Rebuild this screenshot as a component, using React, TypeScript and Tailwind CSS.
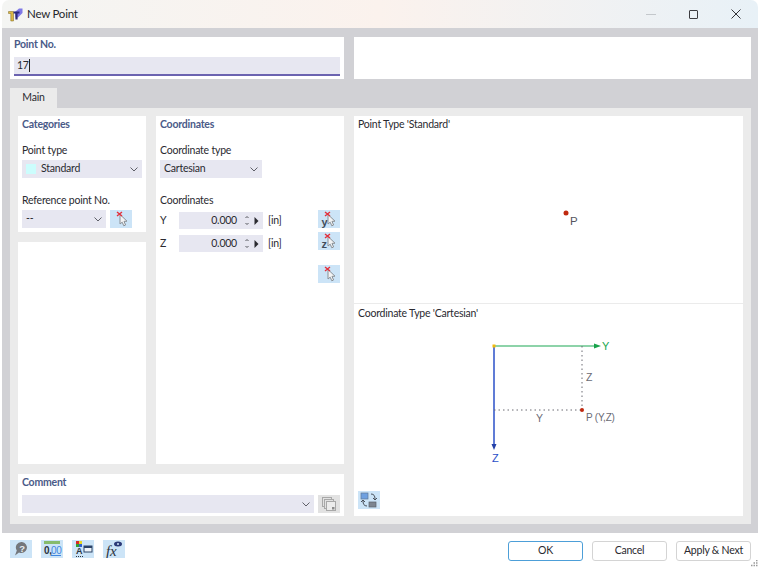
import React from "react";

const Chevron = () => (
  <svg width="8" height="5" viewBox="0 0 8 5" className="shrink-0">
    <path d="M0.5 0.5 L4 4 L7.5 0.5" fill="none" stroke="#5f6068" strokeWidth="1" />
  </svg>
);

const Pick = ({ letter }: { letter?: string }) => (
  <svg width="22" height="18" viewBox="0 0 22 18">
    {letter ? (
      <text x="3.5" y="15.5" fontSize="11" fontWeight="700" fill="#414d5c" fontFamily="'Liberation Sans', sans-serif">{letter}</text>
    ) : null}
    <path d="M10 4.5 L10 14 L12.2 12.2 L13.8 15.8 L15.6 15 L14 11.4 L17 11.2 Z" fill="#f2f3f4" stroke="#8a9096" strokeWidth="1" />
    <path d="M7 2 L12 6 M12 2 L7 6" stroke="#e3303c" strokeWidth="1.4" />
  </svg>
);

const IconBtn = ({ children }: { children: React.ReactNode }) => (
  <div className="w-[22px] h-[18px] bg-[#cce4f7] flex items-center justify-center shrink-0">{children}</div>
);

const Select = ({ className, children }: { className: string; children?: React.ReactNode }) => (
  <div className={`h-[18px] bg-[#e7e7f1] flex items-center justify-between pl-[4px] pr-[4px] ${className}`}>
    <div className="flex items-center min-w-0">{children}</div>
    <Chevron />
  </div>
);

const Spin = ({ label }: { label: string }) => (
  <div className="flex items-center h-[17px]">
    <div className="w-[19px]">{label}</div>
    <div className="w-[84px] h-[17px] bg-[#e7e7f1] flex items-center justify-end">
      <span className="mr-[6px]">0.000</span>
      <svg width="8" height="11" viewBox="0 0 8 11" className="mr-[3px]">
        <path d="M2.5 3 L4 1.5 L5.5 3" fill="none" stroke="#55565c" />
        <path d="M2.5 8 L4 9.5 L5.5 8" fill="none" stroke="#55565c" />
      </svg>
      <svg width="5" height="8" viewBox="0 0 5 8" className="mr-[4px]">
        <path d="M0.5 0 L4.5 4 L0.5 8 Z" fill="#2b2b30" />
      </svg>
    </div>
    <span className="ml-[5px]">[in]</span>
  </div>
);

const Btn = ({ label, primary }: { label: string; primary?: boolean }) => (
  <div
    className={`w-[75px] h-[20px] rounded-[3px] bg-white flex items-center justify-center border ${
      primary ? "border-[#4d9fd8]" : "border-[#d4d4d4]"
    }`}
  >
    {label}
  </div>
);

const Heading = ({ children }: { children: React.ReactNode }) => (
  <div className="font-bold text-[#4a5a88] leading-[15px]">{children}</div>
);

export default function App() {
  return (
    <div className="relative w-[760px] h-[569px] bg-white overflow-hidden text-[10.5px] tracking-[-0.22px] text-[#2a2a30] font-['Lato',sans-serif]">
      <div className="ml-[2px] mr-[2px] h-[569px] flex flex-col rounded-t-[7px] overflow-hidden">
        <div className="h-[28px] shrink-0 bg-gradient-to-r from-[#f4f5f3] via-[#fbf2ed] to-[#e8f1f7] flex items-center pl-[6px]">
          <svg width="15" height="15" viewBox="0 0 15 15" className="shrink-0">
            <path d="M7 5 L11 1.5 L14.5 1.5 L14.5 6 L10 10.5 L7.5 10.5 Z" fill="#7f78e6" />
            <path d="M0.5 4.5 H5.5 V14 H2.8 V6.5 H0.5 Z" fill="#dcb843" stroke="#7a6420" strokeWidth="0.5" />
            <path d="M5.5 4.5 H11.5 V6.5 H9.6 V12.5 H7.4 V6.5 H5.5 Z" fill="#2c2a7c" />
          </svg>
          <span className="ml-[4px] text-[#26262a] text-[11.5px]">New Point</span>
          <div className="flex-1" />
          <div className="w-[10px] h-px bg-[#c4c8cc] mr-[33px]" />
          <div className="w-[9px] h-[9px] border border-[#3c3c40] rounded-[1px] mr-[33px]" />
          <svg width="10" height="10" viewBox="0 0 10 10" className="mr-[17px]">
            <path d="M0.5 0.5 L9.5 9.5 M9.5 0.5 L0.5 9.5" stroke="#333338" strokeWidth="1" />
          </svg>
        </div>

        <div className="h-[505px] shrink-0 bg-[#d1d1d5] pt-[9px] pl-[8px] pr-[7px] flex flex-col">
          <div className="flex gap-[10px] h-[42px] shrink-0">
            <div className="w-[334px] bg-white px-[4px]">
              <Heading>Point No.</Heading>
              <div className="mt-[5px] h-[19px] bg-[#e7e7f1] border-b-2 border-[#6b63b0] flex items-center pl-[3px]">
                <span>17</span>
                <span className="w-px h-[13px] bg-[#222]" />
              </div>
            </div>
            <div className="flex-1 bg-white" />
          </div>

          <div className="mt-[9px] w-[47px] h-[20px] shrink-0 bg-[#ebebeb] flex items-center justify-center">Main</div>

          <div className="h-[416px] shrink-0 bg-[#ebebeb] p-[8px] flex gap-[10px]">
            <div className="w-[326px] flex flex-col gap-[10px]">
              <div className="h-[348px] flex gap-[10px]">
                <div className="w-[128px] flex flex-col gap-[10px]">
                  <div className="h-[116px] bg-white px-[4px] pt-[1px]">
                    <Heading>Categories</Heading>
                    <div className="mt-[10px] leading-[16px]">Point type</div>
                    <Select className="mt-[2px] w-[120px]">
                      <span className="w-[10px] h-[10px] bg-[#ccfdfd] mr-[5px]" />
                      <span>Standard</span>
                    </Select>
                    <div className="mt-[14px] leading-[16px]">Reference point No.</div>
                    <div className="mt-[2px] flex gap-[4px]">
                      <Select className="w-[84px]">--</Select>
                      <IconBtn><Pick /></IconBtn>
                    </div>
                  </div>
                  <div className="flex-1 bg-white" />
                </div>
                <div className="w-[188px] bg-white px-[4px] pt-[1px]">
                  <Heading>Coordinates</Heading>
                  <div className="mt-[10px] leading-[16px]">Coordinate type</div>
                  <Select className="mt-[2px] w-[102px]">Cartesian</Select>
                  <div className="mt-[14px] leading-[16px]">Coordinates</div>
                  <div className="flex">
                    <div className="w-[158px] pt-[4px] flex flex-col gap-[6px]">
                      <Spin label="Y" />
                      <Spin label="Z" />
                    </div>
                    <div className="pt-[2px] flex flex-col">
                      <IconBtn><Pick letter="y" /></IconBtn>
                      <div className="mt-[4px]"><IconBtn><Pick letter="z" /></IconBtn></div>
                      <div className="mt-[15px]"><IconBtn><Pick /></IconBtn></div>
                    </div>
                  </div>
                </div>
              </div>
              <div className="h-[42px] bg-white px-[4px] pt-[1px]">
                <Heading>Comment</Heading>
                <div className="mt-[5px] flex gap-[4px]">
                  <Select className="flex-1" />
                  <div className="w-[22px] h-[18px] bg-[#e2e2e2] flex items-center justify-center">
                    <svg width="14" height="14" viewBox="0 0 14 14">
                      <rect x="0.5" y="0.5" width="9" height="9" fill="#e2e2e2" stroke="#a8a8a8" />
                      <rect x="2.5" y="2.5" width="9" height="9" fill="#e2e2e2" stroke="#a8a8a8" />
                      <rect x="4.5" y="4.5" width="9" height="9" fill="#ececec" stroke="#a8a8a8" />
                      <rect x="10" y="10" width="2.5" height="2.5" fill="#8c8c8c" />
                    </svg>
                  </div>
                </div>
              </div>
            </div>

            <div className="w-[389px] bg-white flex flex-col">
              <div className="h-[188px] shrink-0 border-b border-[#ebebeb] pl-[4px] pt-[1px] flex flex-col">
                <div className="leading-[15px]">Point Type 'Standard'</div>
                <svg width="385" height="100" viewBox="0 0 385 100" className="mt-[5px]">
                  <circle cx="208" cy="76" r="2.5" fill="#c0290f" />
                  <text x="212" y="88" fontSize="11.5" fill="#55555e" fontFamily="'Liberation Sans', sans-serif">P</text>
                </svg>
              </div>
              <div className="flex-1 pl-[4px] pt-[1px] flex flex-col">
                <div className="leading-[16px]">Coordinate Type 'Cartesian'</div>
                <svg width="385" height="150" viewBox="0 0 385 150" className="mt-[3px] shrink-0" fontFamily="'Liberation Sans', sans-serif" fontSize="10">
                  <path d="M136 22 H238" stroke="#67c58c" strokeWidth="1.5" />
                  <path d="M236 19.5 L243 22 L236 24.5 Z" fill="#17a24a" />
                  <text x="244" y="26" fill="#20a850" fontSize="11">Y</text>
                  <path d="M136 22 V122" stroke="#2b50c8" strokeWidth="1.5" />
                  <path d="M133.5 120 L136 126 L138.5 120 Z" fill="#2440a8" />
                  <text x="134" y="138" fill="#2b50c8" fontSize="11">Z</text>
                  <path d="M224 22 V86 M136 86 H224" stroke="#6a6a72" strokeWidth="1" strokeDasharray="1.5 3" />
                  <rect x="134.5" y="20.5" width="3" height="3" fill="#f2b90c" />
                  <circle cx="224" cy="86" r="2" fill="#c0290f" />
                  <text x="228" y="57" fontSize="10.5" fill="#6a6a74">Z</text>
                  <text x="178" y="98" fontSize="10.5" fill="#6a6a74">Y</text>
                  <text x="228" y="97" fill="#6a6a74">P (Y,Z)</text>
                </svg>
                <div className="mt-[17px]">
                  <IconBtn>
                    <svg width="18" height="16" viewBox="0 0 18 16">
                      <rect x="1" y="1" width="7" height="6" fill="#6ea0e0" stroke="#5f7896" strokeWidth="0.7" />
                      <rect x="9" y="10" width="7" height="5" fill="#7d8590" stroke="#59616c" strokeWidth="0.7" />
                      <path d="M11 2 C14 2 15 4 15 7 M13 6 L15 8 L17 6" fill="none" stroke="#4a515b" strokeWidth="1" />
                      <path d="M7 14 C4 14 3 12 3 9 M1 10 L3 8 L5 10" fill="none" stroke="#4a515b" strokeWidth="1" />
                    </svg>
                  </IconBtn>
                </div>
              </div>
            </div>
          </div>
        </div>

        <div className="flex-1 bg-white flex items-start pt-[7px] pl-[8px]">
          <div className="flex gap-[9px]">
            <IconBtn>
              <svg width="18" height="16" viewBox="0 0 18 16">
                <path d="M10 1 A5.5 5.5 0 1 1 7 11.4 L3 14.5 L4.8 9.5 A5.5 5.5 0 0 1 10 1 Z" fill="#74777c" />
                <text x="10" y="10.5" textAnchor="middle" fontSize="9.5" fontWeight="700" fill="#e8eef4" fontFamily="'Liberation Sans', sans-serif">?</text>
              </svg>
            </IconBtn>
            <IconBtn>
              <svg width="20" height="18" viewBox="0 0 20 18" fontFamily="'Liberation Sans', sans-serif">
                <rect x="2" y="1" width="16" height="3" fill="#86bb6c" />
                <text x="2" y="13.5" fontSize="10" fontWeight="700" fill="#2c3440">0,</text>
                <text x="9" y="13.5" fontSize="10" fill="#3f86e0">00</text>
                <path d="M9 15.5 H19" stroke="#3f86e0" strokeWidth="1" />
              </svg>
            </IconBtn>
            <IconBtn>
              <svg width="20" height="18" viewBox="0 0 20 18" fontFamily="'Liberation Sans', sans-serif">
                <rect x="3" y="1" width="3" height="3" fill="#d82828" />
                <rect x="6" y="1" width="3" height="3" fill="#e8d820" />
                <rect x="3" y="4" width="3" height="3" fill="#30a030" />
                <rect x="6" y="4" width="3" height="3" fill="#3060d0" />
                <text x="3" y="14" fontSize="9" fontWeight="700" fill="#2c3440">A</text>
                <path d="M3 16.5 H10" stroke="#2c3440" strokeWidth="1" strokeDasharray="1 1" />
                <rect x="11" y="6" width="8" height="6" fill="#eef3f8" stroke="#2c4468" strokeWidth="1" />
                <rect x="11" y="6" width="8" height="2" fill="#2c4468" />
              </svg>
            </IconBtn>
            <IconBtn>
              <svg width="20" height="18" viewBox="0 0 20 18">
                <text x="2" y="15.5" fontSize="15" fontStyle="italic" fill="#2c3440" fontFamily="'Liberation Serif', serif">fx</text>
                <ellipse cx="14" cy="4" rx="4" ry="2.5" fill="#2c3a78" />
                <circle cx="14" cy="4" r="1" fill="#cce4f7" />
              </svg>
            </IconBtn>
          </div>
          <div className="flex-1" />
          <div className="flex gap-[9px] mr-[7px] mt-[1px]">
            <Btn label="OK" primary />
            <Btn label="Cancel" />
            <Btn label="Apply & Next" />
          </div>
        </div>
      </div>
      <svg width="8" height="8" viewBox="0 0 8 8" className="absolute right-[2px] bottom-[1px]">
        <path d="M6 0.5 H7.5 M3.5 3 H5 M6 3 H7.5 M1 5.5 H2.5 M3.5 5.5 H5 M6 5.5 H7.5" stroke="#9a9a9a" strokeWidth="1.4" />
      </svg>
    </div>
  );
}
